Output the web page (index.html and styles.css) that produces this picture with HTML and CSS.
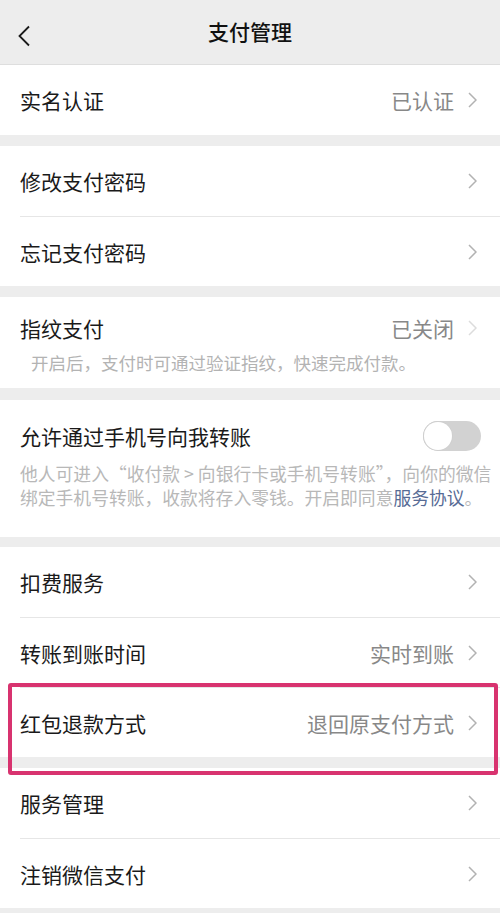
FILE: index.html
```html
<!DOCTYPE html>
<html lang="zh-CN">
<head>
<meta charset="utf-8">
<title>支付管理</title>
<link rel="stylesheet" href="styles.css">
</head>
<body>
<div class="page">
  <header class="navbar">
    <svg class="back" width="14" height="22" viewBox="0 0 14 22"><path d="M12 1.5 L2.5 11 L12 20.5" fill="none" stroke="#1a1a1a" stroke-width="1.8"/></svg>
    <h1 class="nav-title">支付管理</h1>
  </header>

  <section class="group">
    <div class="cell"><div class="cell-body">
      <span class="label">实名认证</span>
      <span class="value">已认证</span>
      <svg class="chev" width="9" height="16" viewBox="0 0 9 16"><path d="M1 1 L8 8 L1 15" fill="none" stroke="#b2b2b2" stroke-width="1.5"/></svg>
    </div></div>
  </section>

  <section class="group">
    <div class="cell"><div class="cell-body">
      <span class="label">修改支付密码</span>
      <svg class="chev" width="9" height="16" viewBox="0 0 9 16"><path d="M1 1 L8 8 L1 15" fill="none" stroke="#b2b2b2" stroke-width="1.5"/></svg>
    </div></div>
    <div class="cell"><div class="cell-body">
      <span class="label">忘记支付密码</span>
      <svg class="chev" width="9" height="16" viewBox="0 0 9 16"><path d="M1 1 L8 8 L1 15" fill="none" stroke="#b2b2b2" stroke-width="1.5"/></svg>
    </div></div>
  </section>

  <section class="group tall fp">
    <div class="tall-head">
      <span class="label">指纹支付</span>
      <span class="value">已关闭</span>
      <svg class="chev" width="9" height="16" viewBox="0 0 9 16"><path d="M1 1 L8 8 L1 15" fill="none" stroke="#dcdcdc" stroke-width="1.5"/></svg>
    </div>
    <p class="sub">开启后，支付时可通过验证指纹，快速完成付款。</p>
  </section>

  <section class="group tall phone">
    <div class="tall-head">
      <span class="label">允许通过手机号向我转账</span>
      <span class="switch"><span class="knob"></span></span>
    </div>
    <p class="desc">他人可进入“收付款 &gt; 向银行卡或手机号转账”，向你的微信<br>绑定手机号转账，收款将存入零钱。开启即同意<a class="link">服务协议</a>。</p>
  </section>

  <section class="group">
    <div class="cell"><div class="cell-body">
      <span class="label">扣费服务</span>
      <svg class="chev" width="9" height="16" viewBox="0 0 9 16"><path d="M1 1 L8 8 L1 15" fill="none" stroke="#b2b2b2" stroke-width="1.5"/></svg>
    </div></div>
    <div class="cell"><div class="cell-body">
      <span class="label">转账到账时间</span>
      <span class="value">实时到账</span>
      <svg class="chev" width="9" height="16" viewBox="0 0 9 16"><path d="M1 1 L8 8 L1 15" fill="none" stroke="#b2b2b2" stroke-width="1.5"/></svg>
    </div></div>
    <div class="cell highlighted"><div class="cell-body">
      <span class="label">红包退款方式</span>
      <span class="value">退回原支付方式</span>
      <svg class="chev" width="9" height="16" viewBox="0 0 9 16"><path d="M1 1 L8 8 L1 15" fill="none" stroke="#b2b2b2" stroke-width="1.5"/></svg>
    </div><span class="mark"></span></div>
  </section>

  <section class="group">
    <div class="cell"><div class="cell-body">
      <span class="label">服务管理</span>
      <svg class="chev" width="9" height="16" viewBox="0 0 9 16"><path d="M1 1 L8 8 L1 15" fill="none" stroke="#b2b2b2" stroke-width="1.5"/></svg>
    </div></div>
    <div class="cell"><div class="cell-body">
      <span class="label">注销微信支付</span>
      <svg class="chev" width="9" height="16" viewBox="0 0 9 16"><path d="M1 1 L8 8 L1 15" fill="none" stroke="#b2b2b2" stroke-width="1.5"/></svg>
    </div></div>
  </section>
</div>
</body>
</html>
```

FILE: styles.css
```css
* { box-sizing: border-box; }
html, body {
  margin: 0;
  padding: 0;
  background: #ededed;
}
body {
  font-family: "Noto Sans CJK SC", "Noto Sans", sans-serif;
  color: #1a1a1a;
}
.page {
  width: 500px;
  min-height: 913px;
  background: #ededed;
}
.navbar {
  height: 65px;
  display: flex;
  align-items: center;
  justify-content: center;
  position: relative;
  border-bottom: 1px solid #dedede;
  background: #ededed;
}
.back {
  position: absolute;
  left: 17px;
  top: 25px;
}
.nav-title {
  margin: 0;
  font-size: 21px;
  font-weight: 500;
  line-height: 30px;
  color: #111;
  margin-top: -2px;
}
.group {
  background: #fff;
  margin-bottom: 11px;
}
.cell {
  padding-left: 20px;
  position: relative;
}
.cell-body {
  height: 70px;
  display: flex;
  align-items: center;
  padding-right: 23px;
}
.cell + .cell .cell-body {
  border-top: 1px solid #e6e6e6;
}
.label {
  font-size: 21px;
  line-height: 30px;
  flex: 1;
  color: #1a1a1a;
}
.value {
  font-size: 21px;
  line-height: 30px;
  color: #888;
  margin-right: 14px;
}
.chev { display: block; flex: none; }
.tall {
  padding-left: 20px;
}
.tall-head {
  display: flex;
  align-items: center;
  padding-right: 23px;
  height: 30px;
}
.fp {
  padding-top: 16px;
  padding-bottom: 13px;
  margin-bottom: 12px;
}
.sub {
  margin: 8px 0 0 11px;
  font-size: 17.5px;
  line-height: 24px;
  color: #b3b3b3;
}
.phone {
  padding-top: 21px;
  padding-bottom: 28px;
  margin-bottom: 10px;
}
.phone .tall-head { padding-right: 19px; }
.desc {
  margin: 10px 0 0 0;
  font-size: 17.8px;
  line-height: 24px;
  color: #b8b8b8;
  white-space: nowrap;
}
.link { color: #576b95; }
.switch {
  width: 58px;
  height: 30px;
  border-radius: 15px;
  background: #d2d2d2;
  position: relative;
  flex: none;
}
.knob {
  position: absolute;
  left: 1px;
  top: 1px;
  width: 28px;
  height: 28px;
  border-radius: 50%;
  background: #fff;
  box-shadow: 0 0 0 1px #cfcfcf;
}
.mark {
  position: absolute;
  left: 8px;
  right: 2px;
  top: -4px;
  bottom: -18px;
  border: 4.5px solid #d8336f;
  border-radius: 3px;
  z-index: 2;
  pointer-events: none;
}
```
